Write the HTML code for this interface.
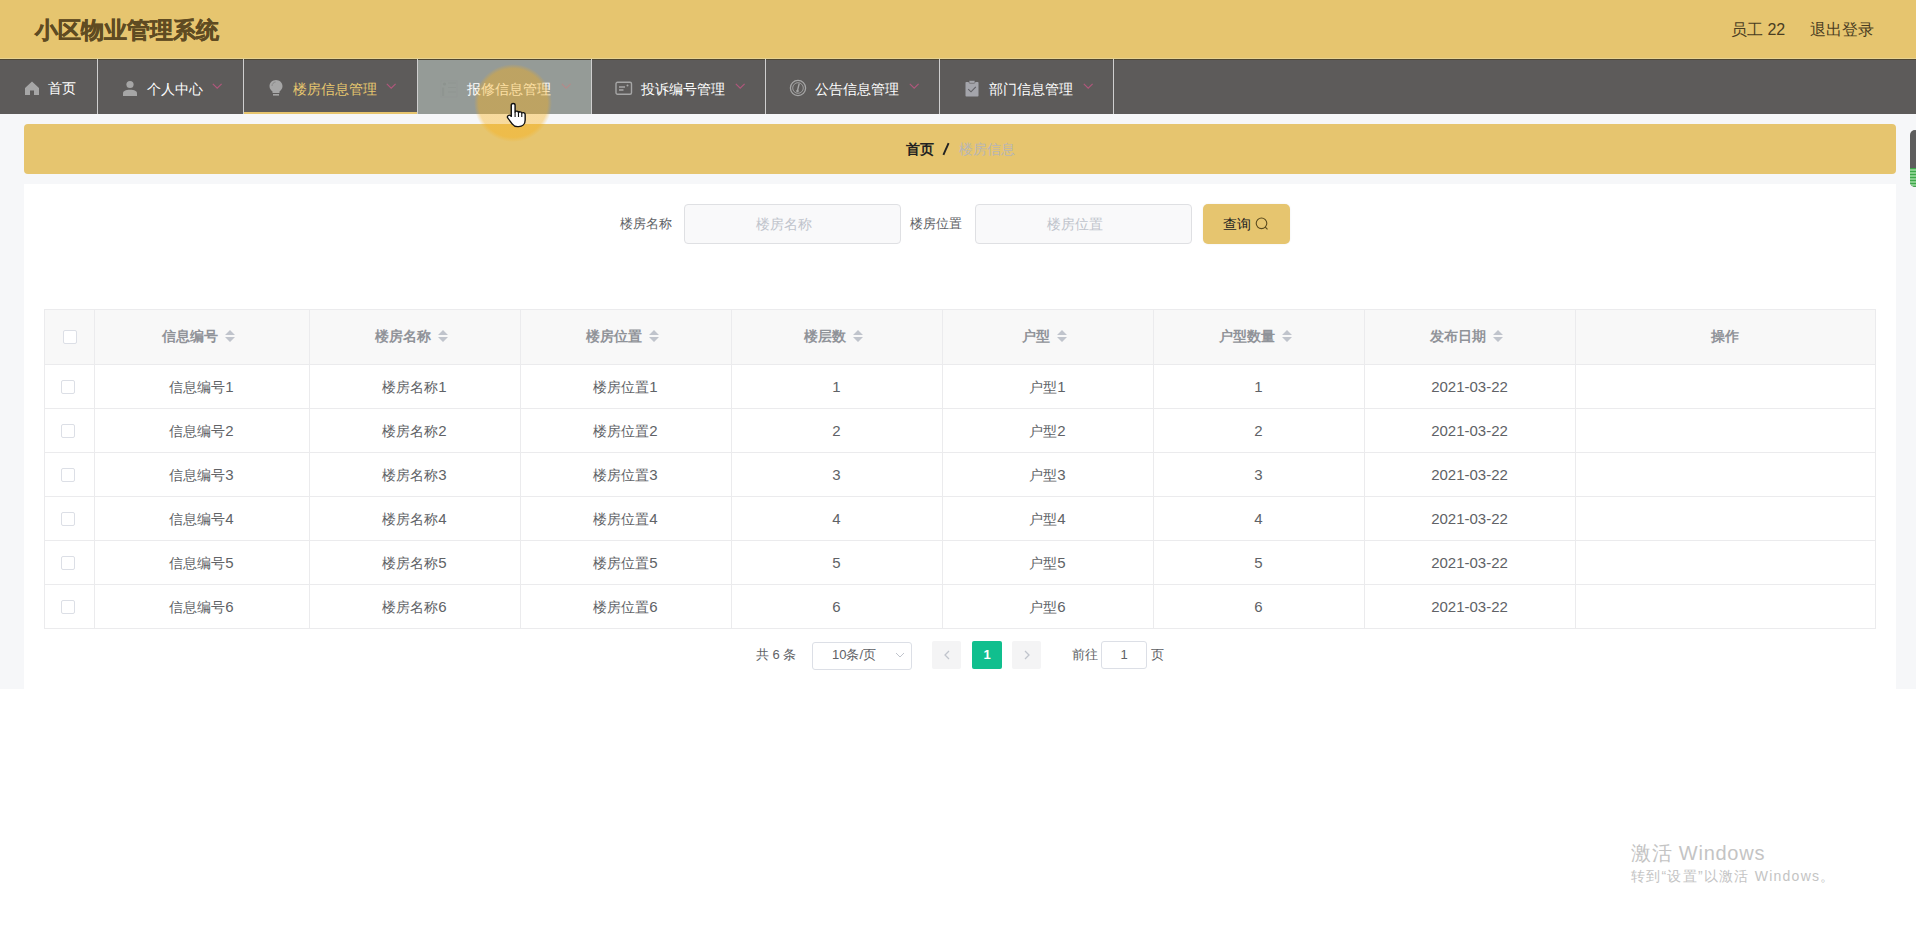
<!DOCTYPE html>
<html><head><meta charset="utf-8"><style>
*{margin:0;padding:0;box-sizing:border-box;}
html,body{width:1916px;height:936px;overflow:hidden;background:#fff;font-family:"Liberation Sans",sans-serif;}
div,span{position:absolute;white-space:nowrap;}
.ni{top:59px;height:55px;}
.nt{top:79px;font-size:14px;line-height:20px;color:#fff;}
.sep{top:59px;width:1px;height:55px;background:#cfcfcf;}
.ico{top:79px;}
.chev{top:83px;width:11px;height:7px;}
.lbl{top:214px;font-size:13px;line-height:20px;color:#606266;}
.inp{top:204px;width:217px;height:40px;background:#f9f9fa;border:1px solid #dfe0e3;border-radius:4px;font-size:14px;line-height:38px;color:#c0c4cc;text-align:center;padding-right:17px;}
.hl{height:1px;background:#ebebed;}
.vl{width:1px;background:#ebebed;}
.th{top:326px;font-size:14px;line-height:20px;color:#909399;font-weight:bold;text-align:center;}
.td{font-size:14px;line-height:20px;color:#606266;text-align:center;}
.td b{font-weight:normal;font-size:15px;}
.cb{width:14px;height:14px;border:1px solid #dcdfe6;border-radius:2px;background:#fff;}
.sort{top:330px;width:10px;height:12px;}
</style></head><body>
<div style="left:0;top:0;width:1916px;height:59px;background:#e6c56f"></div>
<div style="left:35px;top:15px;font-size:23px;line-height:30px;font-weight:bold;color:#5f4b22;-webkit-text-stroke:0.5px #5f4b22">小区物业管理系统</div>
<div style="left:1731px;top:19px;font-size:16px;line-height:22px;color:#4a3d22">员工 22</div>
<div style="left:1810px;top:19px;font-size:16px;line-height:22px;color:#4a3d22">退出登录</div>
<div style="left:0;top:59px;width:1916px;height:55px;background:#5d5b5a"></div>
<div style="left:418px;top:59px;width:173px;height:55px;background:#959b97"></div>
<div style="left:244px;top:112px;width:173px;height:2px;background:#e6c56f"></div>
<div style="left:0;top:58px;width:1916px;height:1px;background:#e8d391"></div>
<div style="left:0;top:59px;width:1916px;height:1px;background:#4f4733"></div>
<div style="left:0;top:114px;width:1916px;height:1px;background:#ffffff"></div>
<div class="sep" style="left:97px"></div>
<div class="sep" style="left:243px"></div>
<div class="sep" style="left:417px"></div>
<div class="sep" style="left:591px"></div>
<div class="sep" style="left:765px"></div>
<div class="sep" style="left:939px"></div>
<div class="sep" style="left:1113px"></div>
<svg class="ico" style="position:absolute;left:24px;top:80px" width="16" height="16" viewBox="0 0 16 16"><path d="M8 1.5 L15 8 V15 H10 V10.5 H6 V15 H1 V8 Z" fill="#a6a6a6"/></svg>
<div class="nt" style="left:48px;top:78px">首页</div>
<svg style="position:absolute;left:122px;top:80px" width="16" height="17" viewBox="0 0 16 17"><circle cx="8" cy="4.5" r="3.6" fill="#a6a6a6"/><path d="M1 16 V13.5 C1 11 3.5 9.8 8 9.8 C12.5 9.8 15 11 15 13.5 V16 Z" fill="#a6a6a6"/></svg>
<div class="nt" style="left:147px">个人中心</div>
<svg style="position:absolute;left:268px;top:79px" width="16" height="18" viewBox="0 0 16 18"><path d="M8 1 C4.3 1 1.5 3.8 1.5 7.2 C1.5 9.6 3 11.2 4.5 12.4 V14 H11.5 V12.4 C13 11.2 14.5 9.6 14.5 7.2 C14.5 3.8 11.7 1 8 1 Z" fill="#a6a6a6"/><rect x="5" y="15" width="6" height="1.6" fill="#a6a6a6"/><path d="M4 7 C4 4.8 5.6 3.2 7.6 3" stroke="#8a8a8a" stroke-width="1" fill="none"/></svg>
<div class="nt" style="left:293px;color:#e8c86f">楼房信息管理</div>
<svg style="position:absolute;left:440px;top:80px" width="18" height="18" viewBox="0 0 18 18"><circle cx="4.5" cy="4" r="1.6" fill="#8d938f"/><rect x="2" y="7.5" width="2.2" height="8.5" fill="#8f9591"/><path d="M8 3 H16 M8 7.5 H16 M8 12 H16" stroke="#909692" stroke-width="1.1"/><path d="M0.8 0.8 H17 V17 H0.8 Z" stroke="#939995" stroke-width="0.6" fill="none"/></svg>
<div class="nt" style="left:467px">报修信息管理</div>
<svg style="position:absolute;left:615px;top:81px" width="18" height="15" viewBox="0 0 18 15"><rect x="1" y="1.2" width="15.5" height="12" rx="1.5" fill="none" stroke="#a6a6a6" stroke-width="1.4"/><path d="M4 6 H10 M4 9 H8.5" stroke="#a6a6a6" stroke-width="1.4"/><circle cx="12.5" cy="4.6" r="1" fill="#a6a6a6"/></svg>
<div class="nt" style="left:641px">投诉编号管理</div>
<svg style="position:absolute;left:789px;top:79px" width="18" height="18" viewBox="0 0 18 18"><circle cx="9" cy="9" r="7.6" fill="none" stroke="#a6a6a6" stroke-width="1.3"/><circle cx="9" cy="9" r="5.3" fill="none" stroke="#a6a6a6" stroke-width="0.9"/><path d="M10.2 4.6 L8.6 11.2" stroke="#a6a6a6" stroke-width="1.4"/><circle cx="8.5" cy="12" r="1.3" fill="#a6a6a6"/></svg>
<div class="nt" style="left:815px">公告信息管理</div>
<svg style="position:absolute;left:965px;top:80px" width="14" height="17" viewBox="0 0 14 17"><rect x="0.5" y="2" width="13" height="14.5" rx="0.8" fill="#a4a5ab"/><rect x="4" y="0.5" width="6" height="2.8" rx="1" fill="#a4a5ab" stroke="#5d5b5a" stroke-width="0.6"/><path d="M3.2 9.2 L6 11.8 L10.8 6.8" stroke="#5f5f64" stroke-width="1.1" fill="none"/></svg>
<div class="nt" style="left:989px">部门信息管理</div>
<svg style="position:absolute;left:212px;top:83px" width="11" height="7" viewBox="0 0 11 7"><path d="M0.8 0.8 L5.2 5.2 L9.6 0.8" stroke="#b0577c" stroke-width="1.15" fill="none"/></svg>
<svg style="position:absolute;left:386px;top:83px" width="11" height="7" viewBox="0 0 11 7"><path d="M0.8 0.8 L5.2 5.2 L9.6 0.8" stroke="#b0577c" stroke-width="1.15" fill="none"/></svg>
<svg style="position:absolute;left:561px;top:83px" width="11" height="7" viewBox="0 0 11 7"><path d="M0.8 0.8 L5.2 5.2 L9.6 0.8" stroke="#b48a8a" stroke-width="1.15" fill="none"/></svg>
<svg style="position:absolute;left:735px;top:83px" width="11" height="7" viewBox="0 0 11 7"><path d="M0.8 0.8 L5.2 5.2 L9.6 0.8" stroke="#b0577c" stroke-width="1.15" fill="none"/></svg>
<svg style="position:absolute;left:909px;top:83px" width="11" height="7" viewBox="0 0 11 7"><path d="M0.8 0.8 L5.2 5.2 L9.6 0.8" stroke="#b0577c" stroke-width="1.15" fill="none"/></svg>
<svg style="position:absolute;left:1083px;top:83px" width="11" height="7" viewBox="0 0 11 7"><path d="M0.8 0.8 L5.2 5.2 L9.6 0.8" stroke="#b0577c" stroke-width="1.15" fill="none"/></svg>
<div style="left:0;top:114px;width:1916px;height:575px;background:#f6f7f9"></div>
<div style="left:24px;top:124px;width:1872px;height:50px;background:#e6c56f;border-radius:4px"></div>
<div style="left:906px;top:139px;font-size:14px;line-height:20px;font-weight:bold;color:#222">首页</div>
<svg style="position:absolute;left:940px;top:141px" width="12" height="16" viewBox="0 0 12 16"><path d="M8.6 2.2 L3.4 13.8" stroke="#222" stroke-width="1.9"/></svg>
<div style="left:959px;top:139px;font-size:14px;line-height:20px;color:#b7b5b6">楼房信息</div>
<div style="left:24px;top:184px;width:1872px;height:505px;background:#fff"></div>
<div class="lbl" style="left:620px">楼房名称</div>
<div class="inp" style="left:684px">楼房名称</div>
<div class="lbl" style="left:910px">楼房位置</div>
<div class="inp" style="left:975px">楼房位置</div>
<div style="left:1203px;top:204px;width:87px;height:40px;background:#e6c56f;border-radius:5px;box-shadow:0 0 2px rgba(0,0,0,0.08)"></div>
<div style="left:1223px;top:214px;font-size:14px;line-height:20px;color:#222">查询</div>
<svg style="position:absolute;left:1255px;top:217px" width="14" height="14" viewBox="0 0 14 14"><circle cx="6.5" cy="6.3" r="5.3" fill="none" stroke="#5a4a1e" stroke-width="1.1"/><path d="M10.3 10.2 L12.5 12.3" stroke="#5a4a1e" stroke-width="1.1"/></svg>
<div style="left:44px;top:309px;width:1832px;height:55px;background:#f8f8f8"></div>
<div class="hl" style="left:44px;top:309px;width:1832px"></div>
<div class="hl" style="left:44px;top:364px;width:1832px"></div>
<div class="hl" style="left:44px;top:408px;width:1832px"></div>
<div class="hl" style="left:44px;top:452px;width:1832px"></div>
<div class="hl" style="left:44px;top:496px;width:1832px"></div>
<div class="hl" style="left:44px;top:540px;width:1832px"></div>
<div class="hl" style="left:44px;top:584px;width:1832px"></div>
<div class="hl" style="left:44px;top:628px;width:1832px"></div>
<div class="vl" style="left:44px;top:309px;height:320px"></div>
<div class="vl" style="left:94px;top:309px;height:320px"></div>
<div class="vl" style="left:309px;top:309px;height:320px"></div>
<div class="vl" style="left:520px;top:309px;height:320px"></div>
<div class="vl" style="left:731px;top:309px;height:320px"></div>
<div class="vl" style="left:942px;top:309px;height:320px"></div>
<div class="vl" style="left:1153px;top:309px;height:320px"></div>
<div class="vl" style="left:1364px;top:309px;height:320px"></div>
<div class="vl" style="left:1575px;top:309px;height:320px"></div>
<div class="vl" style="left:1875px;top:309px;height:320px"></div>
<div class="th" style="left:161.5px;width:56px">信息编号</div>
<svg class="sort" style="position:absolute;left:224.5px;top:330px" width="10" height="12" viewBox="0 0 10 12"><path d="M5 0 L10 5 H0 Z M0 7 H10 L5 12 Z" fill="#c0c4cc"/></svg>
<div class="th" style="left:374.5px;width:56px">楼房名称</div>
<svg class="sort" style="position:absolute;left:437.5px;top:330px" width="10" height="12" viewBox="0 0 10 12"><path d="M5 0 L10 5 H0 Z M0 7 H10 L5 12 Z" fill="#c0c4cc"/></svg>
<div class="th" style="left:585.5px;width:56px">楼房位置</div>
<svg class="sort" style="position:absolute;left:648.5px;top:330px" width="10" height="12" viewBox="0 0 10 12"><path d="M5 0 L10 5 H0 Z M0 7 H10 L5 12 Z" fill="#c0c4cc"/></svg>
<div class="th" style="left:803.5px;width:42px">楼层数</div>
<svg class="sort" style="position:absolute;left:852.5px;top:330px" width="10" height="12" viewBox="0 0 10 12"><path d="M5 0 L10 5 H0 Z M0 7 H10 L5 12 Z" fill="#c0c4cc"/></svg>
<div class="th" style="left:1021.5px;width:28px">户型</div>
<svg class="sort" style="position:absolute;left:1056.5px;top:330px" width="10" height="12" viewBox="0 0 10 12"><path d="M5 0 L10 5 H0 Z M0 7 H10 L5 12 Z" fill="#c0c4cc"/></svg>
<div class="th" style="left:1218.5px;width:56px">户型数量</div>
<svg class="sort" style="position:absolute;left:1281.5px;top:330px" width="10" height="12" viewBox="0 0 10 12"><path d="M5 0 L10 5 H0 Z M0 7 H10 L5 12 Z" fill="#c0c4cc"/></svg>
<div class="th" style="left:1429.5px;width:56px">发布日期</div>
<svg class="sort" style="position:absolute;left:1492.5px;top:330px" width="10" height="12" viewBox="0 0 10 12"><path d="M5 0 L10 5 H0 Z M0 7 H10 L5 12 Z" fill="#c0c4cc"/></svg>
<div class="th" style="left:1711px;width:28px">操作</div>
<div class="cb" style="left:63px;top:330px"></div>
<div class="cb" style="left:61px;top:380px"></div>
<div class="td" style="left:101.5px;width:200px;top:377px">信息编号<b>1</b></div>
<div class="td" style="left:314.5px;width:200px;top:377px">楼房名称<b>1</b></div>
<div class="td" style="left:525.5px;width:200px;top:377px">楼房位置<b>1</b></div>
<div class="td" style="left:736.5px;width:200px;top:377px"><b>1</b></div>
<div class="td" style="left:947.5px;width:200px;top:377px">户型<b>1</b></div>
<div class="td" style="left:1158.5px;width:200px;top:377px"><b>1</b></div>
<div class="td" style="left:1369.5px;width:200px;top:377px"><b>2021-03-22</b></div>
<div class="cb" style="left:61px;top:424px"></div>
<div class="td" style="left:101.5px;width:200px;top:421px">信息编号<b>2</b></div>
<div class="td" style="left:314.5px;width:200px;top:421px">楼房名称<b>2</b></div>
<div class="td" style="left:525.5px;width:200px;top:421px">楼房位置<b>2</b></div>
<div class="td" style="left:736.5px;width:200px;top:421px"><b>2</b></div>
<div class="td" style="left:947.5px;width:200px;top:421px">户型<b>2</b></div>
<div class="td" style="left:1158.5px;width:200px;top:421px"><b>2</b></div>
<div class="td" style="left:1369.5px;width:200px;top:421px"><b>2021-03-22</b></div>
<div class="cb" style="left:61px;top:468px"></div>
<div class="td" style="left:101.5px;width:200px;top:465px">信息编号<b>3</b></div>
<div class="td" style="left:314.5px;width:200px;top:465px">楼房名称<b>3</b></div>
<div class="td" style="left:525.5px;width:200px;top:465px">楼房位置<b>3</b></div>
<div class="td" style="left:736.5px;width:200px;top:465px"><b>3</b></div>
<div class="td" style="left:947.5px;width:200px;top:465px">户型<b>3</b></div>
<div class="td" style="left:1158.5px;width:200px;top:465px"><b>3</b></div>
<div class="td" style="left:1369.5px;width:200px;top:465px"><b>2021-03-22</b></div>
<div class="cb" style="left:61px;top:512px"></div>
<div class="td" style="left:101.5px;width:200px;top:509px">信息编号<b>4</b></div>
<div class="td" style="left:314.5px;width:200px;top:509px">楼房名称<b>4</b></div>
<div class="td" style="left:525.5px;width:200px;top:509px">楼房位置<b>4</b></div>
<div class="td" style="left:736.5px;width:200px;top:509px"><b>4</b></div>
<div class="td" style="left:947.5px;width:200px;top:509px">户型<b>4</b></div>
<div class="td" style="left:1158.5px;width:200px;top:509px"><b>4</b></div>
<div class="td" style="left:1369.5px;width:200px;top:509px"><b>2021-03-22</b></div>
<div class="cb" style="left:61px;top:556px"></div>
<div class="td" style="left:101.5px;width:200px;top:553px">信息编号<b>5</b></div>
<div class="td" style="left:314.5px;width:200px;top:553px">楼房名称<b>5</b></div>
<div class="td" style="left:525.5px;width:200px;top:553px">楼房位置<b>5</b></div>
<div class="td" style="left:736.5px;width:200px;top:553px"><b>5</b></div>
<div class="td" style="left:947.5px;width:200px;top:553px">户型<b>5</b></div>
<div class="td" style="left:1158.5px;width:200px;top:553px"><b>5</b></div>
<div class="td" style="left:1369.5px;width:200px;top:553px"><b>2021-03-22</b></div>
<div class="cb" style="left:61px;top:600px"></div>
<div class="td" style="left:101.5px;width:200px;top:597px">信息编号<b>6</b></div>
<div class="td" style="left:314.5px;width:200px;top:597px">楼房名称<b>6</b></div>
<div class="td" style="left:525.5px;width:200px;top:597px">楼房位置<b>6</b></div>
<div class="td" style="left:736.5px;width:200px;top:597px"><b>6</b></div>
<div class="td" style="left:947.5px;width:200px;top:597px">户型<b>6</b></div>
<div class="td" style="left:1158.5px;width:200px;top:597px"><b>6</b></div>
<div class="td" style="left:1369.5px;width:200px;top:597px"><b>2021-03-22</b></div>
<div style="left:756px;top:645px;font-size:13px;line-height:20px;color:#606266">共 6 条</div>
<div style="left:812px;top:642px;width:100px;height:28px;border:1px solid #dcdfe6;border-radius:3px;background:#fff"></div>
<div style="left:832px;top:645px;font-size:13px;line-height:20px;color:#606266">10条/页</div>
<svg style="position:absolute;left:895px;top:652px" width="10" height="7" viewBox="0 0 10 7"><path d="M1 1 L5 5 L9 1" stroke="#c0c4cc" stroke-width="1" fill="none"/></svg>
<div style="left:932px;top:641px;width:29px;height:28px;background:#f4f4f5;border-radius:2px"></div>
<svg style="position:absolute;left:943px;top:650px" width="8" height="10" viewBox="0 0 8 10"><path d="M6 1 L2 5 L6 9" stroke="#c0c4cc" stroke-width="1.3" fill="none"/></svg>
<div style="left:972px;top:641px;width:30px;height:28px;background:#10bf8e;border-radius:2px"></div>
<div style="left:972px;top:645px;width:30px;font-size:13px;line-height:20px;color:#fff;font-weight:bold;text-align:center">1</div>
<div style="left:1012px;top:641px;width:29px;height:28px;background:#f4f4f5;border-radius:2px"></div>
<svg style="position:absolute;left:1023px;top:650px" width="8" height="10" viewBox="0 0 8 10"><path d="M2 1 L6 5 L2 9" stroke="#c0c4cc" stroke-width="1.3" fill="none"/></svg>
<div style="left:1072px;top:645px;font-size:13px;line-height:20px;color:#606266">前往</div>
<div style="left:1101px;top:641px;width:46px;height:28px;border:1px solid #dcdfe6;border-radius:3px;background:#fff"></div>
<div style="left:1101px;top:645px;width:46px;font-size:13px;line-height:20px;color:#606266;text-align:center">1</div>
<div style="left:1151px;top:645px;font-size:13px;line-height:20px;color:#606266">页</div>
<div style="left:1910px;top:130px;width:10px;height:57px;background:#5e5e5e;border-radius:5px;overflow:hidden"><div style="left:0;top:38px;width:10px;height:19px;background:repeating-linear-gradient(#3da84a 0 1.5px,#86cf8c 1.5px 3px)"></div></div>
<div style="left:1631px;top:840px;font-size:20px;line-height:26px;color:#c4c4c4;letter-spacing:0.75px">激活 Windows</div>
<div style="left:1631px;top:866px;font-size:14px;line-height:20px;color:#c4c4c4;letter-spacing:1.25px">转到“设置”以激活 Windows。</div>
<div style="left:474px;top:64px;width:78px;height:78px;border-radius:50%;background:radial-gradient(circle closest-side,rgba(250,175,20,0.4) 88%,rgba(250,175,20,0) 100%)"></div>
<svg style="position:absolute;left:505.5px;top:102px" width="23" height="26" viewBox="0 0 21 26" preserveAspectRatio="none"><path d="M6.5 1.5 C7.6 1.5 8.3 2.2 8.3 3.3 V10 C8.6 9.3 9.3 9 10 9.1 C10.8 9.2 11.3 9.8 11.4 10.6 C11.7 10 12.3 9.7 13 9.8 C13.8 9.9 14.3 10.5 14.4 11.2 C14.7 10.7 15.3 10.5 16 10.6 C16.9 10.8 17.5 11.5 17.5 12.4 V18 C17.5 22 15 24.6 11.5 24.6 H10.5 C8.3 24.6 6.8 23.5 5.6 21.8 L1.6 16 C1 15.1 1.3 14 2.1 13.5 C2.9 13 3.9 13.3 4.5 14 L4.8 14.4 V3.3 C4.8 2.2 5.4 1.5 6.5 1.5 Z" fill="#fff" stroke="#111" stroke-width="1.3" stroke-linejoin="round"/><path d="M8.3 10 V15 M11.4 10.6 V15 M14.4 11.2 V15" stroke="#111" stroke-width="1"/></svg>
</body></html>
